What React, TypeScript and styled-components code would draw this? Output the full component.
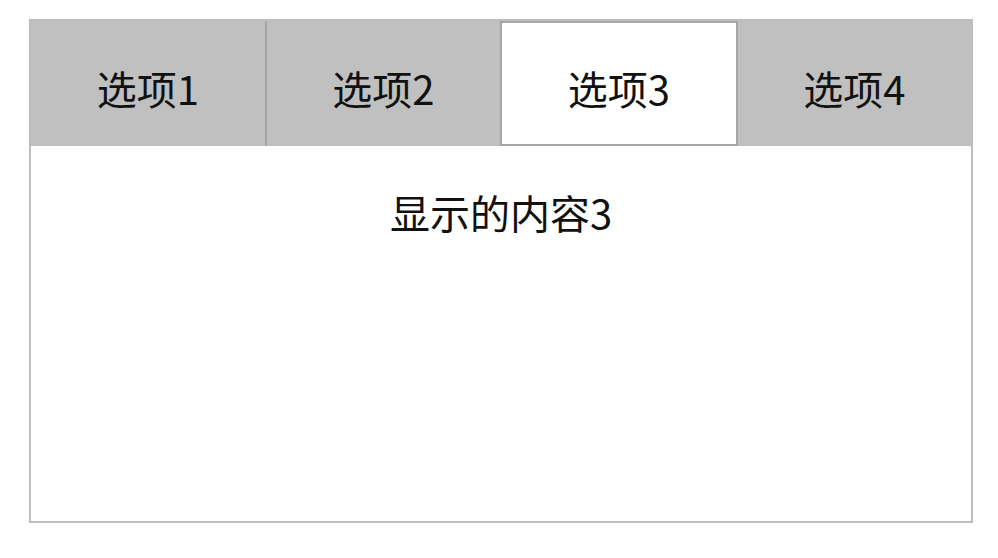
import { useState } from "react";
import styled, { createGlobalStyle } from "styled-components";

const GlobalStyle = createGlobalStyle`
  html, body {
    margin: 0;
    padding: 0;
    background: #fff;
  }
  body {
    font-family: "Noto Sans CJK SC", "Noto Sans", sans-serif;
  }
`;

const TabBox = styled.div`
  box-sizing: border-box;
  width: 944px;
  height: 504px;
  margin: 19px 0 0 29px;
  border: 2px solid #bdbdbd;
  display: flex;
  flex-direction: column;
`;

const TabBar = styled.ul`
  display: flex;
  margin: 0;
  padding: 0;
  list-style: none;
  height: 125px;
  background-color: #c0c0c0;
`;

const TabItem = styled.li<{ $active: boolean }>`
  box-sizing: border-box;
  flex: 1;
  display: flex;
  align-items: center;
  justify-content: center;
  padding-top: 8px;
  font-size: 40px;
  color: #111;
  cursor: pointer;
  background-color: ${(p) => (p.$active ? "#fff" : "#c0c0c0")};
  box-shadow: ${(p) =>
    p.$active ? "inset 0 2px 0 #a6a6a6, inset 0 -2px 0 #a6a6a6" : "none"};

  & + & {
    border-left: 2px solid #a6a6a6;
  }
`;

const Panel = styled.div`
  flex: 1;
  text-align: center;
  padding-top: 42px;
  font-size: 40px;
  line-height: 1.2;
  color: #111;
`;

const tabs = ["选项1", "选项2", "选项3", "选项4"];

function App() {
  const [active, setActive] = useState(2);

  return (
    <>
      <GlobalStyle />
      <TabBox>
        <TabBar>
          {tabs.map((label, i) => (
            <TabItem key={label} $active={i === active} onClick={() => setActive(i)}>
              {label}
            </TabItem>
          ))}
        </TabBar>
        <Panel>显示的内容{active + 1}</Panel>
      </TabBox>
    </>
  );
}

export default App;
